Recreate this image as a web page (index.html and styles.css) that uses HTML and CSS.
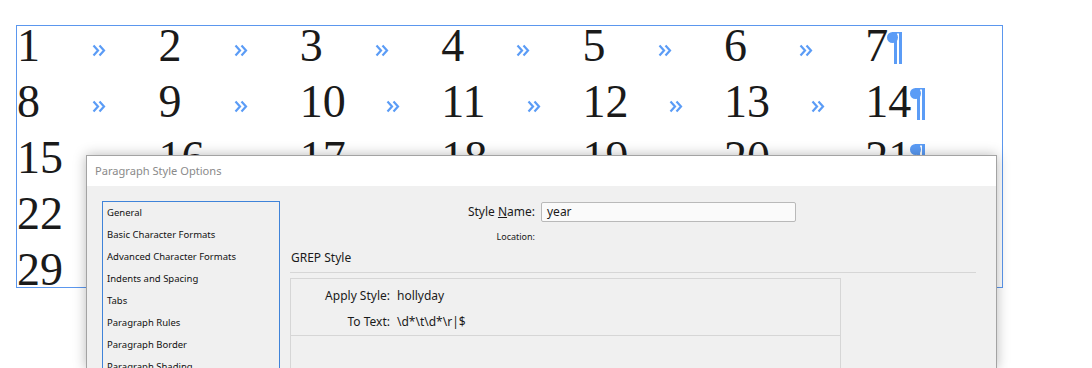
FILE: index.html
```html
<!DOCTYPE html>
<html>
<head>
<meta charset="utf-8">
<link rel="stylesheet" href="styles.css">
</head>
<body>
<div class="frame">
  <div class="row">
    <div class="cell"><span class="num">1</span><span class="tab"><svg class="rq" width="14" height="13" viewBox="0 0 14 13"><path d="M1.5 1.5L6 6.5L1.5 11.5M7.5 1.5L12 6.5L7.5 11.5"/></svg></span></div>
    <div class="cell"><span class="num">2</span><span class="tab"><svg class="rq" width="14" height="13" viewBox="0 0 14 13"><path d="M1.5 1.5L6 6.5L1.5 11.5M7.5 1.5L12 6.5L7.5 11.5"/></svg></span></div>
    <div class="cell"><span class="num">3</span><span class="tab"><svg class="rq" width="14" height="13" viewBox="0 0 14 13"><path d="M1.5 1.5L6 6.5L1.5 11.5M7.5 1.5L12 6.5L7.5 11.5"/></svg></span></div>
    <div class="cell"><span class="num">4</span><span class="tab"><svg class="rq" width="14" height="13" viewBox="0 0 14 13"><path d="M1.5 1.5L6 6.5L1.5 11.5M7.5 1.5L12 6.5L7.5 11.5"/></svg></span></div>
    <div class="cell"><span class="num">5</span><span class="tab"><svg class="rq" width="14" height="13" viewBox="0 0 14 13"><path d="M1.5 1.5L6 6.5L1.5 11.5M7.5 1.5L12 6.5L7.5 11.5"/></svg></span></div>
    <div class="cell"><span class="num">6</span><span class="tab"><svg class="rq" width="14" height="13" viewBox="0 0 14 13"><path d="M1.5 1.5L6 6.5L1.5 11.5M7.5 1.5L12 6.5L7.5 11.5"/></svg></span></div>
    <div class="last"><span class="num">7</span><svg class="pil" width="15" height="32" viewBox="0 0 15 32"><circle cx="5.5" cy="5.5" r="5.5"/><rect x="7" y="0" width="3" height="32"/><rect x="12" y="0" width="3" height="32"/><rect x="5" y="0" width="10" height="1.5"/></svg></div>
  </div>
  <div class="row">
    <div class="cell"><span class="num">8</span><span class="tab"><svg class="rq" width="14" height="13" viewBox="0 0 14 13"><path d="M1.5 1.5L6 6.5L1.5 11.5M7.5 1.5L12 6.5L7.5 11.5"/></svg></span></div>
    <div class="cell"><span class="num">9</span><span class="tab"><svg class="rq" width="14" height="13" viewBox="0 0 14 13"><path d="M1.5 1.5L6 6.5L1.5 11.5M7.5 1.5L12 6.5L7.5 11.5"/></svg></span></div>
    <div class="cell"><span class="num">10</span><span class="tab"><svg class="rq" width="14" height="13" viewBox="0 0 14 13"><path d="M1.5 1.5L6 6.5L1.5 11.5M7.5 1.5L12 6.5L7.5 11.5"/></svg></span></div>
    <div class="cell"><span class="num">11</span><span class="tab"><svg class="rq" width="14" height="13" viewBox="0 0 14 13"><path d="M1.5 1.5L6 6.5L1.5 11.5M7.5 1.5L12 6.5L7.5 11.5"/></svg></span></div>
    <div class="cell"><span class="num">12</span><span class="tab"><svg class="rq" width="14" height="13" viewBox="0 0 14 13"><path d="M1.5 1.5L6 6.5L1.5 11.5M7.5 1.5L12 6.5L7.5 11.5"/></svg></span></div>
    <div class="cell"><span class="num">13</span><span class="tab"><svg class="rq" width="14" height="13" viewBox="0 0 14 13"><path d="M1.5 1.5L6 6.5L1.5 11.5M7.5 1.5L12 6.5L7.5 11.5"/></svg></span></div>
    <div class="last"><span class="num">14</span><svg class="pil" width="15" height="32" viewBox="0 0 15 32"><circle cx="5.5" cy="5.5" r="5.5"/><rect x="7" y="0" width="3" height="32"/><rect x="12" y="0" width="3" height="32"/><rect x="5" y="0" width="10" height="1.5"/></svg></div>
  </div>
  <div class="row">
    <div class="cell"><span class="num">15</span><span class="tab"><svg class="rq" width="14" height="13" viewBox="0 0 14 13"><path d="M1.5 1.5L6 6.5L1.5 11.5M7.5 1.5L12 6.5L7.5 11.5"/></svg></span></div>
    <div class="cell"><span class="num">16</span><span class="tab"><svg class="rq" width="14" height="13" viewBox="0 0 14 13"><path d="M1.5 1.5L6 6.5L1.5 11.5M7.5 1.5L12 6.5L7.5 11.5"/></svg></span></div>
    <div class="cell"><span class="num">17</span><span class="tab"><svg class="rq" width="14" height="13" viewBox="0 0 14 13"><path d="M1.5 1.5L6 6.5L1.5 11.5M7.5 1.5L12 6.5L7.5 11.5"/></svg></span></div>
    <div class="cell"><span class="num">18</span><span class="tab"><svg class="rq" width="14" height="13" viewBox="0 0 14 13"><path d="M1.5 1.5L6 6.5L1.5 11.5M7.5 1.5L12 6.5L7.5 11.5"/></svg></span></div>
    <div class="cell"><span class="num">19</span><span class="tab"><svg class="rq" width="14" height="13" viewBox="0 0 14 13"><path d="M1.5 1.5L6 6.5L1.5 11.5M7.5 1.5L12 6.5L7.5 11.5"/></svg></span></div>
    <div class="cell"><span class="num">20</span><span class="tab"><svg class="rq" width="14" height="13" viewBox="0 0 14 13"><path d="M1.5 1.5L6 6.5L1.5 11.5M7.5 1.5L12 6.5L7.5 11.5"/></svg></span></div>
    <div class="last"><span class="num">21</span><svg class="pil" width="15" height="32" viewBox="0 0 15 32"><circle cx="5.5" cy="5.5" r="5.5"/><rect x="7" y="0" width="3" height="32"/><rect x="12" y="0" width="3" height="32"/><rect x="5" y="0" width="10" height="1.5"/></svg></div>
  </div>
  <div class="row">
    <div class="cell"><span class="num">22</span><span class="tab"><svg class="rq" width="14" height="13" viewBox="0 0 14 13"><path d="M1.5 1.5L6 6.5L1.5 11.5M7.5 1.5L12 6.5L7.5 11.5"/></svg></span></div>
    <div class="cell"><span class="num">23</span><span class="tab"><svg class="rq" width="14" height="13" viewBox="0 0 14 13"><path d="M1.5 1.5L6 6.5L1.5 11.5M7.5 1.5L12 6.5L7.5 11.5"/></svg></span></div>
    <div class="cell"><span class="num">24</span><span class="tab"><svg class="rq" width="14" height="13" viewBox="0 0 14 13"><path d="M1.5 1.5L6 6.5L1.5 11.5M7.5 1.5L12 6.5L7.5 11.5"/></svg></span></div>
    <div class="cell"><span class="num">25</span><span class="tab"><svg class="rq" width="14" height="13" viewBox="0 0 14 13"><path d="M1.5 1.5L6 6.5L1.5 11.5M7.5 1.5L12 6.5L7.5 11.5"/></svg></span></div>
    <div class="cell"><span class="num">26</span><span class="tab"><svg class="rq" width="14" height="13" viewBox="0 0 14 13"><path d="M1.5 1.5L6 6.5L1.5 11.5M7.5 1.5L12 6.5L7.5 11.5"/></svg></span></div>
    <div class="cell"><span class="num">27</span><span class="tab"><svg class="rq" width="14" height="13" viewBox="0 0 14 13"><path d="M1.5 1.5L6 6.5L1.5 11.5M7.5 1.5L12 6.5L7.5 11.5"/></svg></span></div>
    <div class="last"><span class="num">28</span><svg class="pil" width="15" height="32" viewBox="0 0 15 32"><circle cx="5.5" cy="5.5" r="5.5"/><rect x="7" y="0" width="3" height="32"/><rect x="12" y="0" width="3" height="32"/><rect x="5" y="0" width="10" height="1.5"/></svg></div>
  </div>
  <div class="row">
    <div class="cell"><span class="num">29</span><span class="tab"><svg class="rq" width="14" height="13" viewBox="0 0 14 13"><path d="M1.5 1.5L6 6.5L1.5 11.5M7.5 1.5L12 6.5L7.5 11.5"/></svg></span></div>
    <div class="cell"><span class="num">30</span><span class="tab"><svg class="rq" width="14" height="13" viewBox="0 0 14 13"><path d="M1.5 1.5L6 6.5L1.5 11.5M7.5 1.5L12 6.5L7.5 11.5"/></svg></span></div>
    <div class="last"><span class="num">31</span><svg class="pil" width="15" height="32" viewBox="0 0 15 32"><circle cx="5.5" cy="5.5" r="5.5"/><rect x="7" y="0" width="3" height="32"/><rect x="12" y="0" width="3" height="32"/><rect x="5" y="0" width="10" height="1.5"/></svg></div>
  </div>
</div>

<div class="dialog">
  <div class="titlebar">Paragraph Style Options</div>
  <div class="dbody">
    <ul class="list">
      <li>General</li>
      <li>Basic Character Formats</li>
      <li>Advanced Character Formats</li>
      <li>Indents and Spacing</li>
      <li>Tabs</li>
      <li>Paragraph Rules</li>
      <li>Paragraph Border</li>
      <li>Paragraph Shading</li>
    </ul>
    <div class="pane">
      <div class="field">
        <span class="lbl">Style <u>N</u>ame:</span>
        <div class="input">year</div>
      </div>
      <div class="field loc">
        <span class="lbl small">Location:</span>
      </div>
      <div class="heading">GREP Style</div>
      <div class="rule"></div>
      <div class="box">
        <div class="sect">
          <div class="kv"><span class="k">Apply Style:</span><span class="v">hollyday</span></div>
          <div class="kv"><span class="k">To Text:</span><span class="v">\d*\t\d*\r|$</span></div>
        </div>
      </div>
    </div>
  </div>
</div>
</body>
</html>
```

FILE: styles.css
```css
html, body {
  margin: 0;
  padding: 0;
}
body {
  width: 1092px;
  height: 368px;
  overflow: hidden;
  background: #ffffff;
  position: relative;
}

/* text frame */
.frame {
  margin: 25px 0 0 16px;
  width: 985px;
  height: 261px;
  border: 1px solid #5b97ee;
  overflow: hidden;
  font-family: "Liberation Serif", "Times New Roman", serif;
  font-size: 46px;
  color: #1a1a1a;
}
.row {
  display: flex;
  height: 56px;
  line-height: 40px;
  white-space: nowrap;
}
.cell {
  flex: none;
  width: 141.4px;
  display: flex;
  align-items: baseline;
}
.tab {
  flex: 1;
  text-align: center;
}
.rq {
  vertical-align: 4px;
}
.rq path {
  fill: none;
  stroke: #5b9cf6;
  stroke-width: 2.2;
}
.last {
  flex: none;
}
.pil {
  vertical-align: -3px;
  margin-left: -1px;
  fill: #5b9cf6;
}

/* dialog */
.dialog {
  position: absolute;
  left: 86px;
  top: 155px;
  width: 909px;
  height: 213px;
  overflow: hidden;
  border: 1px solid #a3a3a3;
  border-bottom: none;
  background: #f0f0f0;
  box-shadow: 0 0 12px rgba(0, 0, 0, 0.28);
  font-family: "Noto Sans", "Open Sans", sans-serif;
  color: #1a1a1a;
}
.titlebar {
  height: 30px;
  line-height: 30px;
  background: #ffffff;
  padding-left: 8px;
  font-size: 11.1px;
  color: #8a8a8a;
}
.dbody {
  display: flex;
  gap: 10px;
  padding: 15px 0 0 15px;
}
.list {
  flex: none;
  width: 178px;
  height: 200px;
  box-sizing: border-box;
  border: 1px solid #3f83d9;
  margin: 0;
  padding: 0 0 0 4px;
  list-style: none;
  font-size: 9.5px;
  color: #111;
}
.list li {
  line-height: 22px;
}
.pane {
  flex: none;
  width: 686px;
  display: flex;
  flex-direction: column;
}
.field {
  display: grid;
  grid-template-columns: 245px 255px;
  column-gap: 6px;
  align-items: center;
}
.lbl {
  text-align: right;
  font-size: 12px;
  line-height: 20px;
}
.lbl.small {
  font-size: 9px;
  line-height: 14px;
}
.input {
  margin-top: 1px;
  height: 20px;
  box-sizing: border-box;
  border: 1px solid #b9b9b9;
  border-radius: 2px;
  background: #fafafa;
  padding-left: 5px;
  font-size: 12px;
  line-height: 18px;
}
.loc {
  margin-top: 8px;
}
.heading {
  margin-top: 6px;
  padding-left: 1px;
  font-size: 12px;
  line-height: 16px;
}
.rule {
  margin-top: 6px;
  height: 1px;
  background: #d6d6d6;
}
.box {
  margin-top: 5px;
  width: 551px;
  height: 120px;
  box-sizing: border-box;
  border: 1px solid #d6d6d6;
  border-bottom: none;
}
.sect {
  padding: 9px 0 5px;
  border-bottom: 1px solid #d6d6d6;
  display: flex;
  flex-direction: column;
  gap: 10px;
}
.kv {
  display: grid;
  grid-template-columns: 99px auto;
  column-gap: 7px;
  font-size: 12px;
  line-height: 16px;
}
.k {
  text-align: right;
}
```
